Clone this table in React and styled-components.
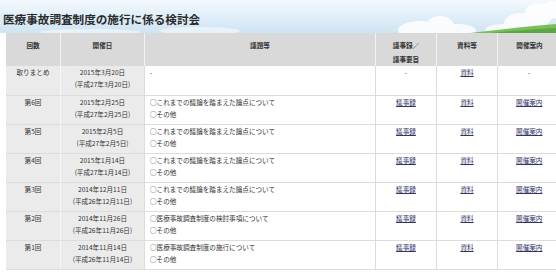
import React from 'react';
import styled, { createGlobalStyle } from 'styled-components';

const GlobalStyle = createGlobalStyle`
  html, body {
    margin: 0;
    padding: 0;
    background: #fff;
    font-family: "Noto Sans CJK JP", "Noto Sans", sans-serif;
  }
`;

const rows = [
  { no: '取りまとめ', date: '2015年3月20日', era: '(平成27年3月20日)', topics: ['-'], minutes: false, notice: false },
  { no: '第6回', date: '2015年2月25日', era: '(平成27年2月25日)', topics: ['○これまでの議論を踏まえた論点について', '○その他'], minutes: true, notice: true },
  { no: '第5回', date: '2015年2月5日', era: '(平成27年2月5日)', topics: ['○これまでの議論を踏まえた論点について', '○その他'], minutes: true, notice: true },
  { no: '第4回', date: '2015年1月14日', era: '(平成27年1月14日)', topics: ['○これまでの議論を踏まえた論点について', '○その他'], minutes: true, notice: true },
  { no: '第3回', date: '2014年12月11日', era: '(平成26年12月11日)', topics: ['○これまでの議論を踏まえた論点について', '○その他'], minutes: true, notice: true },
  { no: '第2回', date: '2014年11月26日', era: '(平成26年11月26日)', topics: ['○医療事故調査制度の検討事項について', '○その他'], minutes: true, notice: true },
  { no: '第1回', date: '2014年11月14日', era: '(平成26年11月14日)', topics: ['○医療事故調査制度の施行について', '○その他'], minutes: true, notice: true },
];

const Page = styled.div`
  width: 556px;
  height: 273px;
  overflow: hidden;
`;

const Banner = styled.div`
  position: relative;
  height: 33px;
  background: linear-gradient(180deg, #f4f9fd 0%, #e2eff9 45%, #cfe4f3 100%);
  overflow: hidden;
`;

const Sky = styled.svg`
  position: absolute;
  left: 0;
  top: 0;
`;

const Title = styled.h1`
  position: relative;
  margin: 0;
  padding: 12px 0 0 3px;
  font-size: 11.6px;
  line-height: 14px;
  font-weight: 700;
  color: #2b2b2b;
`;

const Table = styled.table`
  margin-left: 6px;
  width: 550px;
  border-collapse: collapse;
  table-layout: fixed;
  font-size: 6.6px;
  color: #333;
`;

const HeadRow = styled.tr`
  height: 30px;
`;

const Head = styled.th`
  width: ${p => p.$w}px;
  background: #d9d9d9;
  border-left: 1px solid #f2f2f2;
  font-weight: 700;
  vertical-align: top;
  padding: 5px 0 0;
  line-height: 14px;
  text-align: center;
  &:first-child { border-left: none; }
`;

const Row = styled.tr`
  height: 29px;
  border-bottom: 1px solid #dcdcdc;
`;

const Cell = styled.td`
  background: ${p => (p.$gray ? '#ebebeb' : '#fff')};
  border-left: 1px solid ${p => (p.$gray ? '#f6f6f6' : '#dcdcdc')};
  text-align: ${p => (p.$left ? 'left' : 'center')};
  padding: ${p => (p.$left ? '0 0 0 5px' : '0')};
  vertical-align: top;
  line-height: 12px;
  &:first-child { border-left: none; }
  &:last-child { border-right: 1px solid #dcdcdc; }
`;

const Line = styled.div`
  white-space: nowrap;
`;

const Link = styled.a`
  color: #333366;
  text-decoration: underline;
`;

export default function App() {
  return (
    <Page>
      <GlobalStyle />
      <Banner>
        <Sky width="556" height="33" viewBox="0 0 556 33">
          <g fill="#ffffff" opacity="0.85">
            <ellipse cx="420" cy="30" rx="22" ry="9" />
            <ellipse cx="440" cy="26" rx="14" ry="10" />
            <ellipse cx="458" cy="31" rx="18" ry="7" />
            <ellipse cx="520" cy="24" rx="16" ry="11" />
            <ellipse cx="538" cy="15" rx="14" ry="12" />
            <ellipse cx="552" cy="10" rx="10" ry="9" />
            <ellipse cx="505" cy="30" rx="20" ry="6" />
          </g>
          <g fill="#ffffff" opacity="0.5">
            <ellipse cx="200" cy="31" rx="40" ry="4" />
            <ellipse cx="90" cy="32" rx="50" ry="3" />
          </g>
          <path d="M470 33 Q520 27 556 24 L556 33 Z" fill="#7cbf5a" />
          <path d="M490 33 Q530 29 556 28 L556 33 Z" fill="#5aa845" />
        </Sky>
        <Title>医療事故調査制度の施行に係る検討会</Title>
      </Banner>
      <Table>
        <thead>
          <HeadRow>
            <Head $w={54}>回数</Head>
            <Head $w={83}>開催日</Head>
            <Head $w={230}>議題等</Head>
            <Head $w={60}>議事録／<br />議事要旨</Head>
            <Head $w={60}>資料等</Head>
            <Head $w={63}>開催案内</Head>
          </HeadRow>
        </thead>
        <tbody>
          {rows.map(r => (
            <Row key={r.no}>
              <Cell $gray>{r.no}</Cell>
              <Cell $gray>
                <Line>{r.date}</Line>
                <Line>{r.era}</Line>
              </Cell>
              <Cell $left>
                {r.topics.map(t => <Line key={t}>{t}</Line>)}
              </Cell>
              <Cell>{r.minutes ? <Link href="#">議事録</Link> : '-'}</Cell>
              <Cell><Link href="#">資料</Link></Cell>
              <Cell>{r.notice ? <Link href="#">開催案内</Link> : '-'}</Cell>
            </Row>
          ))}
        </tbody>
      </Table>
    </Page>
  );
}
